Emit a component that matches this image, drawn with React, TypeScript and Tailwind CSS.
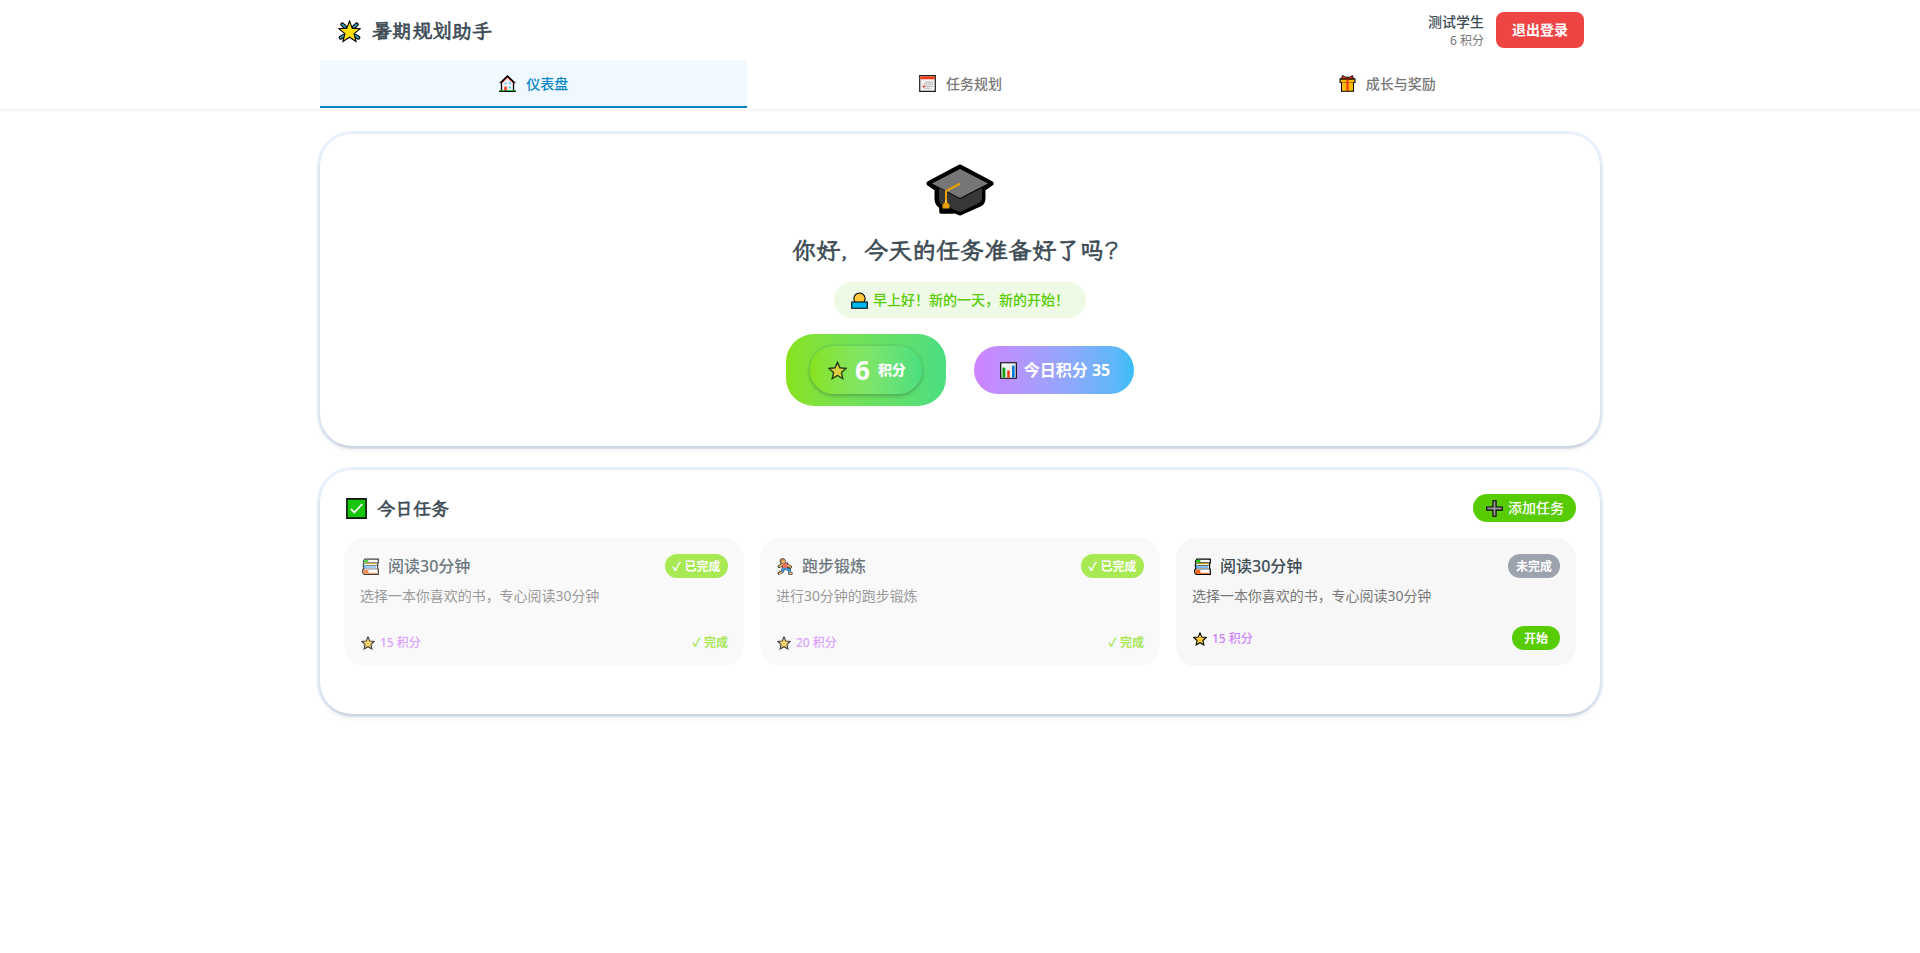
import type { ReactNode } from "react";

type IconProps = { className?: string };

function Icon({ className = "", children }: { className?: string; children: ReactNode }) {
  return (
    <svg viewBox="0 0 24 24" className={`shrink-0 ${className}`} fill="none" strokeLinejoin="miter">
      {children}
    </svg>
  );
}

const STAR = "M12 1.5l3.1 7.1 7.6.8-5.7 5.2 1.7 7.7L12 18.3l-6.7 4 1.7-7.7L1.300 9.400l7.600-.8z";

function GlowStar({ className }: IconProps) {
  return (
    <Icon className={className}>
      <path d="M4.500 4.500l3 3M19.500 4.500l-3 3M2.800 18.500l3-2M21.200 18.500l-3-2" stroke="#000" strokeWidth="4.200" strokeLinecap="round" />
      <path d="M4.500 4.500l3 3M19.500 4.500l-3 3M2.800 18.500l3-2M21.200 18.500l-3-2" stroke="#3aa6c4" strokeWidth="1.900" strokeLinecap="round" />
      <path d="M12 1l2.800 7.500 8.400.500-6.500 5.200 2.200 8.300L12 18l-6.900 4.500 2.200-8.300L.800 9l8.400-.500z" fill="#ffe000" stroke="#000" strokeWidth="1.100" />
    </Icon>
  );
}

function Star({ className }: IconProps) {
  return (
    <Icon className={className}>
      <path d={STAR} fill="#ffc83d" stroke="#000" strokeWidth="1.800" />
    </Icon>
  );
}

function House({ className }: IconProps) {
  return (
    <Icon className={className}>
      <path d="M3.500 10.500L12 2l8.500 8.500V23h-17z" fill="#f2f2f2" stroke="#000" strokeWidth="1.800" />
      <path d="M3.500 12L12 3.500l8.500 8.500" stroke="#e8281c" strokeWidth="1.300" />
      <path d="M1 11.500L12 1l11 10.500" stroke="#000" strokeWidth="1.500" />
      <path d="M8 10.500h2.600v2.600H8zM14 10.500h2.600v2.600H14zM14 16.500h2.600v2.600H14z" fill="#4cc5f7" />
      <path d="M7.500 16.500h3.500V22H7.500z" fill="#f03a17" />
      <path d="M0 23h24" stroke="#000" strokeWidth="1.800" />
      <path d="M1 22h6.500M11 22h12" stroke="#16c60c" strokeWidth="1.200" />
    </Icon>
  );
}

function CalendarIcon({ className }: IconProps) {
  return (
    <Icon className={className}>
      <path d="M1 1h22v22H1z" fill="#f2f2f2" stroke="#1c1c1c" strokeWidth="1.700" />
      <path d="M1.800 2h20.400v4H1.800z" fill="#f03a17" />
      <path d="M9 10h11M7 13h13M5 16h15M9 19h7" stroke="#a8a8a8" strokeWidth="1.800" strokeDasharray="1.800 1" />
      <path d="M5 16h4M7 15v4" stroke="#f03a17" strokeWidth="1.200" />
    </Icon>
  );
}

function Gift({ className }: IconProps) {
  return (
    <Icon className={className}>
      <path d="M3.500 10h17v13h-17z" fill="#ffb900" stroke="#000" strokeWidth="1.500" />
      <path d="M1.500 5.500h21v5h-21z" fill="#ffb900" stroke="#000" strokeWidth="1.500" />
      <path d="M3.500 10h17" stroke="#ffb900" strokeWidth="1.600" />
      <path d="M12 5v17.300" stroke="#f03a17" strokeWidth="3" />
      <path d="M3.500 5.500L5 .800 9 3h6l4-2.200 1.500 4.700z" fill="#f03a17" stroke="#000" strokeWidth="1.300" />
    </Icon>
  );
}

function GraduationCap({ className }: IconProps) {
  return (
    <svg viewBox="0 0 68 52" className={`shrink-0 ${className ?? ""}`} fill="none" strokeLinejoin="round">
      <path d="M34 3L3 19.500 11 25v10c0 4 2 6 5 7.500V47h13l5 2 20-9c2-1 3-3 3-6v-9l8-5.500z" fill="#000" stroke="#000" strokeWidth="5" />
      <path d="M13.500 44h14v5.500h-14z" fill="#000" />
      <path d="M13 24v10c0 4 1 6 4 7.500L34 48l19-9c2-1 3-3 3-6v-9L34 35z" fill="#383838" />
      <path d="M12.500 42.500h11l4 4.500h-13z" fill="#000" />
      <path d="M34 5L6 19.500 34 34l28-14.500z" fill="#767676" />
      <path d="M33.500 20L20 27v13" stroke="#e8a200" strokeWidth="2" strokeLinecap="round" />
      <path d="M16.500 44.500V41l2-2.500h3L23.500 41v3.500z" fill="#e8a200" />
      <circle cx="20" cy="37.500" r="1" fill="#ffe08a" />
    </svg>
  );
}

function Sunrise({ className }: IconProps) {
  return (
    <Icon className={className}>
      <circle cx="12" cy="9.300" r="8" fill="#ffc83d" stroke="#000" strokeWidth="1.500" />
      <path d="M1 14h22v9H1z" fill="#00b7f0" stroke="#000" strokeWidth="1.500" />
    </Icon>
  );
}

function Chart({ className }: IconProps) {
  return (
    <Icon className={className}>
      <path d="M1 1h22v22H1z" fill="#f2f2f2" stroke="#000" strokeWidth="1.600" />
      <path d="M3.500 8h4v14h-4z" fill="#13a10e" />
      <path d="M10.200 12h3.600v10h-3.600z" fill="#f03a17" />
      <path d="M17 5h3.600v17H17z" fill="#0078d7" />
    </Icon>
  );
}

function CheckBox({ className }: IconProps) {
  return (
    <Icon className={className}>
      <path d="M1 1h22v22H1z" fill="#16c60c" stroke="#111" strokeWidth="1.800" />
      <path d="M5.500 12.500l4 4 9-9.500" stroke="#fff" strokeWidth="1.900" />
    </Icon>
  );
}

function PlusIcon({ className }: IconProps) {
  return (
    <Icon className={className}>
      <path d="M9.800 1h4.400v8.800H23v4.400h-8.800V23H9.800v-8.800H1V9.800h8.800z" fill="#999" stroke="#000" strokeWidth="1.600" />
    </Icon>
  );
}

function Books({ className }: IconProps) {
  return (
    <Icon className={className}>
      <path d="M4 1.500h19v5.500l-1 1v7l1 1v7H3L1 21v-4l2-3-1-2V9l1-2-1-2z" fill="#fff" stroke="#000" strokeWidth="1.700" />
      <path d="M22 6.500H5M21 10.500H4M22 15.500H3" stroke="#222" strokeWidth="1.100" />
      <path d="M3 2.500h6V6H3z" fill="#16c60c" />
      <path d="M4 7.800h17" stroke="#c19c00" strokeWidth="1.500" />
      <path d="M3 12.800h17" stroke="#4aa3f0" strokeWidth="2" />
      <path d="M3 9.500h3v4H3z" fill="#4aa3f0" />
      <path d="M2 17h7v5H2z" fill="#f7630c" />
      <path d="M8 21.500h14" stroke="#f7630c" strokeWidth="1.300" />
    </Icon>
  );
}

function Runner({ className }: IconProps) {
  return (
    <Icon className={className}>
      <path d="M8 9l-5 3M14 10l5 2.500M9.500 15L7 19.500l-4 2M13 15l4.500 1.500.500 5h2" stroke="#000" strokeWidth="4.400" strokeLinecap="round" />
      <path d="M8 7.500h6.500V15H8z" fill="#e8432a" stroke="#000" strokeWidth="2.400" />
      <circle cx="8" cy="4.500" r="3.800" fill="#b5651d" stroke="#000" strokeWidth="1.200" />
      <path d="M8 9l-4.500 2.800M14.500 10l4.500 2.500" stroke="#ffb02e" strokeWidth="2.200" strokeLinecap="round" />
      <path d="M8 7.500h6.500V15H8z" fill="#e8432a" />
      <path d="M9.500 15.500l-2 3M13 15.500l4.500 1.200.400 2.800" stroke="#0078d7" strokeWidth="3.200" strokeLinecap="round" />
      <path d="M6 20.500l-2.500 1M18 21.500h2" stroke="#ffb02e" strokeWidth="2.200" strokeLinecap="round" />
      <path d="M7.500 3.500H11V7H7.500z" fill="#ffb02e" />
    </Icon>
  );
}

const tabs = [
  { label: "仪表盘", icon: House, active: true },
  { label: "任务规划", icon: CalendarIcon, active: false },
  { label: "成长与奖励", icon: Gift, active: false },
];

const tasks = [
  { title: "阅读30分钟", text: "选择一本你喜欢的书，专心阅读30分钟", points: 15, icon: Books, done: true },
  { title: "跑步锻炼", text: "进行30分钟的跑步锻炼", points: 20, icon: Runner, done: true },
  { title: "阅读30分钟", text: "选择一本你喜欢的书，专心阅读30分钟", points: 15, icon: Books, done: false },
];

const panel =
  "rounded-[32px] bg-white px-6 shadow-[0_4px_6px_-1px_rgba(0,0,0,0.1),0_2px_4px_-2px_rgba(0,0,0,0.1),0_0_0_3px_#e8f0fe]";
const kai =
  "font-['KaiTi','LXGW_WenKai_TC','Noto_Sans_CJK_SC',cursive] font-normal [-webkit-text-stroke:0.7px_currentColor]";

function TaskCard({ task }: { task: (typeof tasks)[number] }) {
  const TaskIcon = task.icon;
  return (
    <article className={`flex h-32 flex-col rounded-[20px] bg-[#f7f7f7] p-4 ${task.done ? "opacity-75" : ""}`}>
      <div className="flex h-6 items-center justify-between">
        <h3 className="flex items-center text-base font-medium text-[#3c4b54]">
          <TaskIcon className={task.icon === Runner ? "ml-px mr-2 size-[17px]" : "ml-0.5 mr-[9px] size-[17px]"} />
          {task.title}
        </h3>
        <span
          className={`flex h-6 items-center rounded-full text-xs font-bold text-white ${
            task.done ? "w-[63px] justify-center bg-[#89e219]" : "bg-[#9ca3af] px-2"
          }`}
        >
          <span className="whitespace-nowrap pt-px">{task.done ? "✓ 已完成" : "未完成"}</span>
        </span>
      </div>
      <p className="mt-2 text-sm leading-5 tracking-[-0.04px] text-[#777777]">{task.text}</p>
      <div className={`mt-auto flex items-center justify-between text-xs leading-4 ${task.done ? "translate-y-px" : ""}`}>
        <span className={`flex items-center gap-[5px] font-medium tracking-[-0.05px] text-[#ce82ff] ${task.done ? "" : "pt-0.5"}`}>
          <Star className="ml-px size-[14px]" />
          {task.points} 积分
        </span>
        {task.done ? (
          <span className="font-bold text-[#89e219]">✓ 完成</span>
        ) : (
          <button className="h-6 rounded-full bg-[#58cc02] px-3 pt-px font-bold text-white">开始</button>
        )}
      </div>
    </article>
  );
}

export default function App() {
  return (
    <div className="min-h-[953px] bg-white font-['Noto_Sans','Noto_Sans_CJK_SC',sans-serif] text-[#3c4b54]" lang="zh-CN">
      <header className="h-[111px] border-b-2 border-[#f5f5f5]">
        <div className="mx-auto w-[1280px]">
          <div className="flex h-[60px] items-center justify-between px-4">
            <h1 className={`flex items-center gap-3 pt-0.5 text-xl ${kai}`}>
              <GlowStar className="ml-0.5 size-[23px]" />
              <span className="-ml-px">暑期规划助手</span>
            </h1>
            <div className="flex items-center gap-3">
              <div className="text-right">
                <p className="text-sm font-medium leading-5">测试学生</p>
                <p className="pt-px text-xs leading-4 text-[#777777]">6 积分</p>
              </div>
              <button className="h-9 rounded-lg bg-[#ef4444] px-4 text-sm font-bold text-white">退出登录</button>
            </div>
          </div>
          <nav className="grid h-12 grid-cols-3">
            {tabs.map(({ label, icon: TabIcon, active }) => (
              <a
                key={label}
                className={`flex items-center justify-center gap-2.5 border-b-2 pl-px pt-px text-sm font-medium ${
                  active ? "border-[#0284c7] bg-[#f0f9ff] text-[#0284c7]" : "border-transparent text-[#777777]"
                }`}
              >
                <TabIcon className="size-[17px]" />
                {label}
              </a>
            ))}
          </nav>
        </div>
      </header>

      <main className="mx-auto flex w-[1280px] flex-col gap-6 pt-[23px]">
        <section className={`${panel} flex h-[312px] flex-col items-center pt-[30px]`}>
          <GraduationCap className="h-[52px] w-[68px]" />
          <h2 className={`mt-[17px] h-[33px] text-2xl leading-8 ${kai}`}>
            你好<span className="font-['Klee_One']">，</span>今天的任务准备好了吗<span className="inline-block -translate-x-[5px] font-['Klee_One']">？</span>
          </h2>
          <p className="mt-4 flex h-9 items-center gap-[5px] rounded-full bg-[#eef9e6] pl-[17px] pr-[17px] text-sm font-medium text-[#58cc02]">
            <Sunrise className="size-[17px]" />
            早上好！新的一天，新的开始！
          </p>
          <div className="mt-4 flex items-center gap-7">
            <div className="flex h-[72px] w-40 items-center justify-center rounded-[28px] bg-linear-to-r from-[#89e219] to-[#4ade80]">
              <div className="flex h-12 w-28 items-center rounded-full bg-linear-to-r from-[#89e219] via-[#7fe668] to-[#4ade80] pl-[18px] text-white shadow-[0_2px_4px_rgba(0,0,0,0.2),0_0_0_2px_rgba(90,190,100,0.25)]">
                <Star className="size-[19px] opacity-70" />
                <span className="ml-2 text-[26px] font-bold">6</span>
                <span className="ml-2 text-sm font-black">积分</span>
              </div>
            </div>
            <div className="flex h-12 w-40 items-center justify-center gap-[7px] rounded-full bg-linear-to-r from-[#ce82ff] to-[#38bdf8] pl-0.5 text-base font-bold text-white">
              <Chart className="size-[17px]" />
              今日积分 35
            </div>
          </div>
        </section>

        <section className={`${panel} h-[244px] pt-6`}>
          <div className="flex h-7 items-center justify-between">
            <h2 className={`flex items-center gap-2.5 text-lg ${kai}`}>
              <CheckBox className="ml-0.5 size-[21px]" />
              今日任务
            </h2>
            <button className="flex h-7 items-center gap-[5px] rounded-full bg-[#58cc02] px-3 text-sm font-medium text-white">
              <PlusIcon className="ml-px size-[17px]" />
              添加任务
            </button>
          </div>
          <div className="mt-4 grid grid-cols-3 gap-4">
            {tasks.map((task, i) => (
              <TaskCard key={i} task={task} />
            ))}
          </div>
        </section>
      </main>
    </div>
  );
}
